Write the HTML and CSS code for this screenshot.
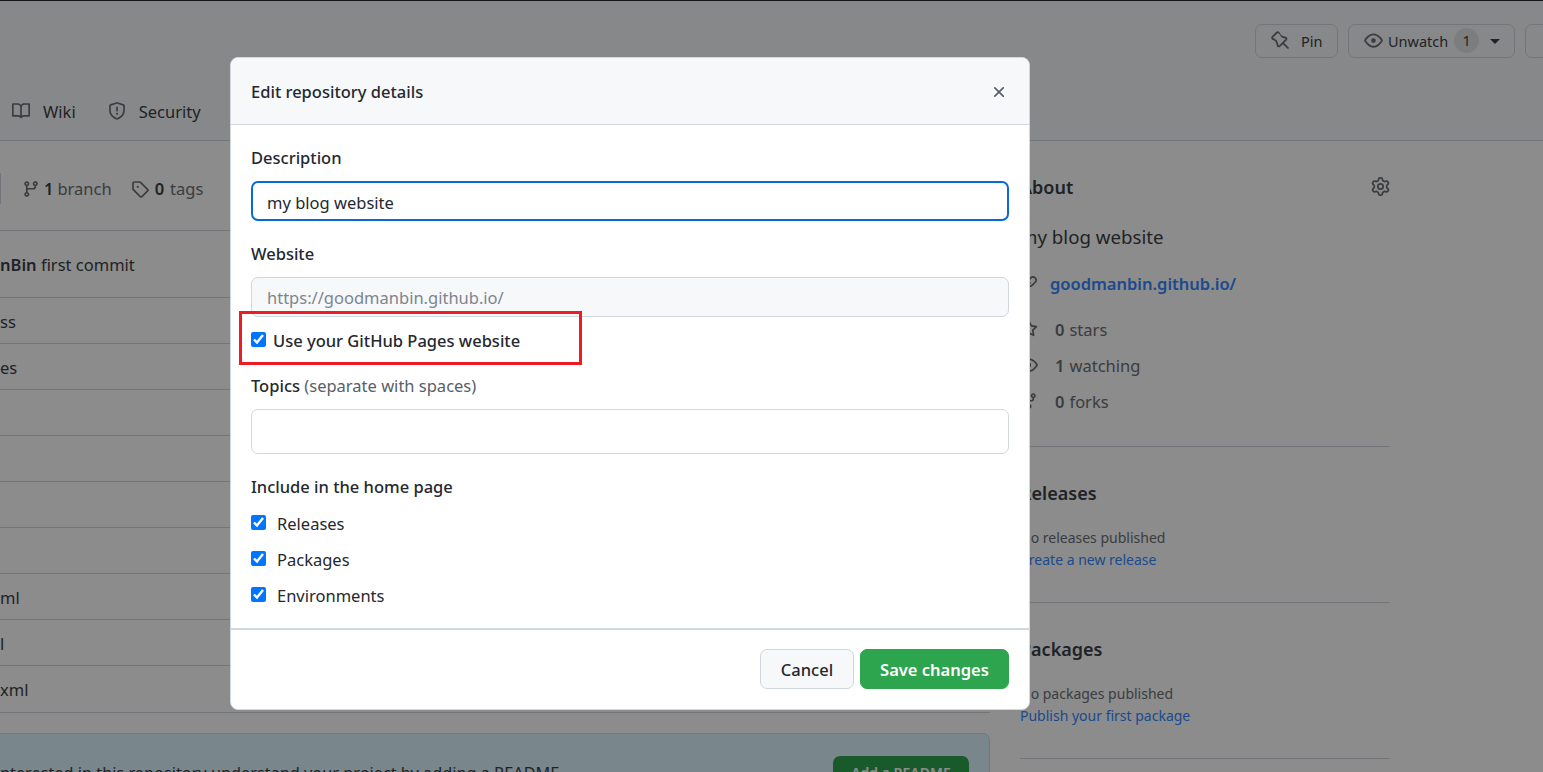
FILE: index.html

```html
<!DOCTYPE html>
<html lang="en">
<head>
    <meta charset="UTF-8">
    <title>Edit repository details</title>
    <link rel="stylesheet" href="styles.css">
</head>
<body>
    <svg class="sprite" width="0" height="0">
        <symbol id="i-pin" viewBox="0 0 16 16"><path d="M4.456.734a1.75 1.75 0 012.826.504l.613 1.327a3.081 3.081 0 002.084 1.707l2.454.584c1.332.317 1.8 1.972.832 2.94L11.06 10l3.72 3.72a.75.75 0 11-1.061 1.06L10 11.06l-2.204 2.205c-.968.968-2.623.5-2.94-.832l-.584-2.454a3.081 3.081 0 00-1.707-2.084l-1.327-.613a1.75 1.75 0 01-.504-2.826L4.456.734zM5.92 1.866a.25.25 0 00-.404-.072L1.794 5.516a.25.25 0 00.072.404l1.328.613A4.582 4.582 0 015.73 9.63l.584 2.454a.25.25 0 00.42.12l5.47-5.47a.25.25 0 00-.12-.42L10.63 6.13a4.581 4.581 0 01-3.098-2.537L6.92 2.265z"/></symbol>
        <symbol id="i-eye" viewBox="0 0 16 16"><path d="M8 2c1.981 0 3.671.992 4.933 2.078 1.27 1.091 2.187 2.345 2.637 3.023a1.62 1.62 0 0 1 0 1.798c-.45.678-1.367 1.932-2.637 3.023C11.67 13.008 9.981 14 8 14c-1.981 0-3.671-.992-4.933-2.078C1.797 10.83.88 9.576.43 8.898a1.62 1.62 0 0 1 0-1.798c.45-.677 1.367-1.931 2.637-3.022C4.33 2.992 6.019 2 8 2ZM1.679 7.932a.12.12 0 0 0 0 .136c.411.622 1.241 1.75 2.366 2.717C5.176 11.758 6.527 12.5 8 12.5c1.473 0 2.825-.742 3.955-1.715 1.124-.967 1.954-2.096 2.366-2.717a.12.12 0 0 0 0-.136c-.412-.621-1.242-1.75-2.366-2.717C10.824 4.242 9.473 3.5 8 3.5c-1.473 0-2.825.742-3.955 1.715-1.124.967-1.954 2.096-2.366 2.717ZM8 10a2 2 0 1 1-.001-3.999A2 2 0 0 1 8 10Z"/></symbol>
        <symbol id="i-book" viewBox="0 0 16 16"><path d="M0 1.75A.75.75 0 0 1 .75 1h4.253c1.227 0 2.317.59 3 1.501A3.743 3.743 0 0 1 11.006 1h4.245a.75.75 0 0 1 .75.75v10.5a.75.75 0 0 1-.75.75h-4.507a2.25 2.25 0 0 0-1.591.659l-.622.621a.75.75 0 0 1-1.06 0l-.622-.621A2.25 2.25 0 0 0 5.258 13H.75a.75.75 0 0 1-.75-.75Zm7.251 10.324.004-5.073-.002-2.253A2.25 2.25 0 0 0 5.003 2.5H1.5v9h3.757a3.75 3.75 0 0 1 1.994.574ZM8.755 4.75l-.004 7.322a3.752 3.752 0 0 1 1.992-.572H14.5v-9h-3.495a2.25 2.25 0 0 0-2.25 2.25Z"/></symbol>
        <symbol id="i-shield" viewBox="0 0 16 16"><path d="M7.467.133a1.748 1.748 0 0 1 1.066 0l5.25 1.68A1.75 1.75 0 0 1 15 3.48V7c0 1.566-.32 3.182-1.303 4.682-.983 1.498-2.585 2.813-5.032 3.855a1.697 1.697 0 0 1-1.33 0c-2.447-1.042-4.049-2.357-5.032-3.855C1.32 10.182 1 8.566 1 7V3.48a1.75 1.75 0 0 1 1.217-1.667Zm.61 1.429a.25.25 0 0 0-.153 0l-5.25 1.68a.25.25 0 0 0-.174.238V7c0 1.358.275 2.666 1.057 3.86.784 1.194 2.121 2.34 4.366 3.297a.196.196 0 0 0 .154 0c2.245-.956 3.582-2.104 4.366-3.298C13.225 9.666 13.5 8.36 13.5 7V3.48a.251.251 0 0 0-.174-.237l-5.25-1.68ZM8.75 4.75v3a.75.75 0 0 1-1.5 0v-3a.75.75 0 0 1 1.5 0ZM9 10.5a1 1 0 1 1-2 0 1 1 0 0 1 2 0Z"/></symbol>
        <symbol id="i-branch" viewBox="0 0 16 16"><path d="M9.5 3.25a2.25 2.25 0 1 1 3 2.122V6A2.5 2.5 0 0 1 10 8.5H6a1 1 0 0 0-1 1v1.128a2.251 2.251 0 1 1-1.5 0V5.372a2.25 2.25 0 1 1 1.5 0v1.836A2.493 2.493 0 0 1 6 7h4a1 1 0 0 0 1-1v-.628A2.25 2.25 0 0 1 9.5 3.25Zm-6 0a.75.75 0 1 0 1.5 0 .75.75 0 0 0-1.5 0Zm8.25-.75a.75.75 0 1 0 0 1.5.75.75 0 0 0 0-1.5ZM4.25 12a.75.75 0 1 0 0 1.5.75.75 0 0 0 0-1.5Z"/></symbol>
        <symbol id="i-tag" viewBox="0 0 16 16"><path d="M1 7.775V2.75C1 1.784 1.784 1 2.75 1h5.025c.464 0 .91.184 1.238.513l6.25 6.25a1.75 1.75 0 0 1 0 2.474l-5.026 5.026a1.75 1.75 0 0 1-2.474 0l-6.25-6.25A1.752 1.752 0 0 1 1 7.775Zm1.5 0c0 .066.026.13.073.177l6.25 6.25a.25.25 0 0 0 .354 0l5.025-5.025a.25.25 0 0 0 0-.354l-6.25-6.25a.25.25 0 0 0-.177-.073H2.75a.25.25 0 0 0-.25.25ZM6 5a1 1 0 1 1 0 2 1 1 0 0 1 0-2Z"/></symbol>
        <symbol id="i-gear" viewBox="0 0 16 16"><path d="M8 0a8.2 8.2 0 0 1 .701.031C9.444.095 9.99.645 10.16 1.29l.288 1.107c.018.066.079.158.212.224.231.114.454.243.668.386.123.082.233.09.299.071l1.103-.303c.644-.176 1.392.021 1.82.63.27.385.506.792.704 1.218.315.675.111 1.422-.364 1.891l-.814.806c-.049.048-.098.147-.088.294.016.257.016.515 0 .772-.01.147.038.246.088.294l.814.806c.475.469.679 1.216.364 1.891a7.977 7.977 0 0 1-.704 1.217c-.428.61-1.176.807-1.82.63l-1.102-.302c-.067-.019-.177-.011-.3.071a5.909 5.909 0 0 1-.668.386c-.133.066-.194.158-.211.224l-.29 1.106c-.168.646-.715 1.196-1.458 1.26a8.006 8.006 0 0 1-1.402 0c-.743-.064-1.289-.614-1.458-1.26l-.289-1.106c-.018-.066-.079-.158-.212-.224a5.738 5.738 0 0 1-.668-.386c-.123-.082-.233-.09-.299-.071l-1.103.303c-.644.176-1.392-.021-1.82-.63a8.12 8.12 0 0 1-.704-1.218c-.315-.675-.111-1.422.363-1.891l.815-.806c.05-.048.098-.147.088-.294a6.214 6.214 0 0 1 0-.772c.01-.147-.038-.246-.088-.294l-.815-.806C.635 6.045.431 5.298.746 4.623a7.92 7.92 0 0 1 .704-1.217c.428-.61 1.176-.807 1.82-.63l1.102.302c.067.019.177.011.3-.071.214-.143.437-.272.668-.386.133-.066.194-.158.211-.224l.29-1.106C6.009.645 6.556.095 7.299.03 7.53.01 7.764 0 8 0Zm-.571 1.525c-.036.003-.108.036-.137.146l-.289 1.105c-.147.561-.549.967-.998 1.189-.173.086-.34.183-.5.29-.417.278-.97.423-1.529.27l-1.103-.303c-.109-.03-.175.016-.195.045-.22.312-.412.644-.573.99-.014.031-.021.11.059.19l.815.806c.411.406.562.957.53 1.456a4.709 4.709 0 0 0 0 .582c.032.499-.119 1.05-.53 1.456l-.815.806c-.081.08-.073.159-.059.19.162.346.353.677.573.989.02.03.085.076.195.046l1.102-.303c.56-.153 1.113-.008 1.53.27.161.107.328.204.501.29.447.222.85.629.997 1.189l.289 1.105c.029.109.101.143.137.146a6.6 6.6 0 0 0 1.142 0c.036-.003.108-.036.137-.146l.289-1.105c.147-.561.549-.967.998-1.189.173-.086.34-.183.5-.29.417-.278.97-.423 1.529-.27l1.103.303c.109.029.175-.016.195-.045.22-.313.411-.644.573-.99.014-.031.021-.11-.059-.19l-.815-.806c-.411-.406-.562-.957-.53-1.456a4.709 4.709 0 0 0 0-.582c-.032-.499.119-1.05.53-1.456l.815-.806c.081-.08.073-.159.059-.19a6.464 6.464 0 0 0-.573-.989c-.02-.03-.085-.076-.195-.046l-1.102.303c-.56.153-1.113.008-1.53-.27a4.44 4.44 0 0 0-.501-.29c-.447-.222-.85-.629-.997-1.189l-.289-1.105c-.029-.11-.101-.143-.137-.146a6.6 6.6 0 0 0-1.142 0ZM11 8a3 3 0 1 1-6 0 3 3 0 0 1 6 0ZM9.5 8a1.5 1.5 0 1 0-3.001.001A1.5 1.5 0 0 0 9.5 8Z"/></symbol>
        <symbol id="i-x" viewBox="0 0 16 16"><path d="M3.72 3.72a.75.75 0 0 1 1.06 0L8 6.94l3.22-3.22a.749.749 0 0 1 1.275.326.749.749 0 0 1-.215.734L9.06 8l3.22 3.22a.749.749 0 0 1-.326 1.275.749.749 0 0 1-.734-.215L8 9.06l-3.22 3.22a.751.751 0 0 1-1.042-.018.751.751 0 0 1-.018-1.042L6.94 8 3.72 4.78a.75.75 0 0 1 0-1.06Z"/></symbol>
        <symbol id="i-link" viewBox="0 0 16 16"><path d="m7.775 3.275 1.25-1.25a3.5 3.5 0 1 1 4.95 4.95l-2.5 2.5a3.5 3.5 0 0 1-4.95 0 .751.751 0 0 1 .018-1.042.751.751 0 0 1 1.042-.018 1.998 1.998 0 0 0 2.83 0l2.5-2.5a2.002 2.002 0 0 0-2.83-2.83l-1.25 1.25a.751.751 0 0 1-1.042-.018.751.751 0 0 1-.018-1.042Zm-4.69 9.64a1.998 1.998 0 0 0 2.83 0l1.25-1.25a.751.751 0 0 1 1.042.018.751.751 0 0 1 .018 1.042l-1.25 1.25a3.5 3.5 0 1 1-4.95-4.95l2.5-2.5a3.5 3.5 0 0 1 4.95 0 .751.751 0 0 1-.018 1.042.751.751 0 0 1-1.042.018 1.998 1.998 0 0 0-2.83 0l-2.5 2.5a1.998 1.998 0 0 0 0 2.83Z"/></symbol>
        <symbol id="i-star" viewBox="0 0 16 16"><path d="M8 .25a.75.75 0 0 1 .673.418l1.882 3.815 4.21.612a.75.75 0 0 1 .416 1.279l-3.046 2.97.719 4.192a.751.751 0 0 1-1.088.791L8 12.347l-3.766 1.98a.75.75 0 0 1-1.088-.79l.72-4.194L.818 6.374a.75.75 0 0 1 .416-1.28l4.21-.611L7.327.668A.75.75 0 0 1 8 .25Zm0 2.445L6.615 5.5a.75.75 0 0 1-.564.41l-3.097.45 2.24 2.184a.75.75 0 0 1 .216.664l-.528 3.084 2.769-1.456a.75.75 0 0 1 .698 0l2.77 1.456-.53-3.084a.75.75 0 0 1 .216-.664l2.24-2.183-3.096-.45a.75.75 0 0 1-.564-.41L8 2.694Z"/></symbol>
        <symbol id="i-fork" viewBox="0 0 16 16"><path d="M5 5.372v.878c0 .414.336.75.75.75h4.5a.75.75 0 0 0 .75-.75v-.878a2.25 2.25 0 1 1 1.5 0v.878a2.25 2.25 0 0 1-2.25 2.25h-1.5v2.128a2.251 2.251 0 1 1-1.5 0V8.5h-1.5A2.25 2.25 0 0 1 3.5 6.25v-.878a2.25 2.25 0 1 1 1.5 0ZM5 3.25a.75.75 0 1 0-1.5 0 .75.75 0 0 0 1.5 0Zm6.75.75a.75.75 0 1 0 0-1.5.75.75 0 0 0 0 1.5Zm-3 8.75a.75.75 0 1 0-1.5 0 .75.75 0 0 0 1.5 0Z"/></symbol>
    </svg>

    <div class="page">
        <div class="topbar"></div>

        <header class="repo-head">
            <div class="repo-actions">
                <a class="btn btn-pin"><svg class="icon-lg"><use href="#i-pin"/></svg>Pin</a>
                <a class="btn btn-watch"><svg class="icon-lg"><use href="#i-eye"/></svg>Unwatch<span class="counter">1</span><span class="caret"></span></a>
                <a class="btn btn-cut"></a>
            </div>
            <nav class="repo-tabs">
                <a class="tab tab-wiki"><svg class="icon"><use href="#i-book"/></svg>Wiki</a>
                <a class="tab"><svg class="icon"><use href="#i-shield"/></svg>Security</a>
            </nav>
        </header>

        <main class="repo-main">
            <section class="files">
                <div class="branch-bar">
                    <span class="branch-select"></span>
                    <a class="meta meta-branch"><svg class="icon"><use href="#i-branch"/></svg><b>1</b> branch</a>
                    <a class="meta meta-tags"><svg class="icon"><use href="#i-tag"/></svg><b>0</b> tags</a>
                </div>
                <div class="file-box">
                    <div class="commit-row"><b>nBin</b> first commit</div>
                    <div class="file-row">ss</div>
                    <div class="file-row">es</div>
                    <div class="file-row"></div>
                    <div class="file-row"></div>
                    <div class="file-row"></div>
                    <div class="file-row"></div>
                    <div class="file-row">ml</div>
                    <div class="file-row">l</div>
                    <div class="file-row file-last">xml</div>
                </div>
                <div class="readme-hint">
                    <span>nterested in this repository understand your project by adding a README</span>
                    <a class="btn-readme">Add a README</a>
                </div>
            </section>

            <aside class="side">
                <div class="side-block side-about">
                    <div class="side-title"><h2>About</h2><svg class="icon gear"><use href="#i-gear"/></svg></div>
                    <p class="side-desc">my blog website</p>
                    <a class="side-link"><svg class="icon"><use href="#i-link"/></svg>goodmanbin.github.io/</a>
                    <div class="side-stat"><svg class="icon"><use href="#i-star"/></svg><b>0</b> stars</div>
                    <div class="side-stat"><svg class="icon"><use href="#i-eye"/></svg><b>1</b> watching</div>
                    <div class="side-stat"><svg class="icon"><use href="#i-fork"/></svg><b>0</b> forks</div>
                </div>
                <div class="side-block">
                    <h2>Releases</h2>
                    <p class="side-small">No releases published</p>
                    <a class="side-small side-blue">Create a new release</a>
                </div>
                <div class="side-block">
                    <h2>Packages</h2>
                    <p class="side-small">No packages published</p>
                    <a class="side-small side-blue">Publish your first package</a>
                </div>
            </aside>
        </main>

        <div class="backdrop"></div>

        <div class="dialog">
            <div class="dialog-head">
                <h1>Edit repository details</h1>
                <svg class="icon close"><use href="#i-x"/></svg>
            </div>
            <form class="dialog-body">
                <label class="field-label" for="desc">Description</label>
                <input class="input input-focus" id="desc" type="text" value="my blog website">

                <label class="field-label" for="site">Website</label>
                <input class="input input-off" id="site" type="text" placeholder="https://goodmanbin.github.io/" disabled>

                <label class="pages-check"><input type="checkbox" checked>Use your GitHub Pages website</label>

                <label class="field-label" for="topics">Topics <span class="hint">(separate with spaces)</span></label>
                <input class="input input-tall" id="topics" type="text">

                <div class="field-label include-label">Include in the home page</div>
                <label class="home-check"><input type="checkbox" checked>Releases</label>
                <label class="home-check"><input type="checkbox" checked>Packages</label>
                <label class="home-check"><input type="checkbox" checked>Environments</label>
            </form>
            <div class="dialog-foot">
                <button class="btn-cancel" type="button">Cancel</button>
                <button class="btn-save" type="button">Save changes</button>
            </div>
        </div>

        <div class="highlight"></div>
    </div>
</body>
</html>
```

FILE: styles.css

```css
* { box-sizing: border-box; }
html, body { margin: 0; height: 100%; overflow: hidden; }
body { font-family: "Noto Sans", "Open Sans", Arial, sans-serif; font-size: 16.5px; color: #24292f; background: #fff; }
h1, h2, p { margin: 0; }
.sprite { position: absolute; }
.icon { width: 18px; height: 18px; fill: #6b7075; flex: none; }
.icon-lg { width: 19px; height: 19px; fill: #6b7075; flex: none; }

.page { position: relative; width: 1543px; height: 772px; overflow: hidden; color: #3a3f45; }
.topbar { height: 1px; background: #24292f; }

/* repo header */
.repo-head { height: 140px; background: #f6f8fa; border-bottom: 1px solid #d0d7de; }
.repo-actions { display: flex; justify-content: flex-end; gap: 10px; padding-top: 23px; margin-right: -27px; }
.btn { display: flex; align-items: center; height: 34px; padding-bottom: 1px; border: 1px solid #d0d7de; border-radius: 7px; background: #f6f8fa; font-size: 14.5px; }
.btn-pin { width: 83px; padding-left: 15px; gap: 11px; }
.btn-watch { width: 167px; padding-left: 15px; gap: 5px; }
.btn-cut { width: 45px; }
.counter { width: 25px; height: 25px; border-radius: 50%; background: #e1e4e8; margin-left: 1px; text-align: center; line-height: 25px; }
.caret { width: 0; height: 0; border: 5px solid transparent; border-top-color: #3a3f45; border-bottom: 0; margin: 2px 0 0 6px; }
.repo-tabs { display: flex; gap: 32px; padding: 33px 0 0 12px; }
.tab { display: flex; align-items: center; gap: 13px; height: 40px; }

/* main columns */
.repo-main { display: flex; align-items: flex-start; gap: 30px; }
.files { width: 990px; flex: none; }
.branch-bar { display: flex; align-items: center; height: 89px; padding-top: 6px; }
.branch-select { width: 1px; height: 31px; background: #d0d7de; margin-right: 21px; }
.meta { display: flex; align-items: center; gap: 4px; color: #6b7075; }
.meta b { color: #3a3f45; font-weight: 600; }
.meta-branch { margin-right: 19px; }
.meta-tags { gap: 6px; }
.file-box { border-top: 1px solid #d0d7de; border-bottom: 1px solid #d0d7de; }
.commit-row { height: 66px; line-height: 68px; }
.commit-row b { font-weight: 600; }
.file-row { height: 46px; line-height: 47px; border-top: 1px solid #d0d7de; }
.file-last { height: 47px; }
.readme-hint { display: flex; justify-content: space-between; margin: 20px 0 0 -8px; height: 60px; padding: 22px 20px 0 8px; background: #ddf4ff; border: 1px solid #b6e3ff; border-radius: 7px; }
.readme-hint span { padding-top: 6px; font-size: 16.3px; margin-left: -1px; }
.btn-readme { height: 36px; width: 136px; background: #2da44e; color: #fff; border-radius: 7px; text-align: center; line-height: 34px; font-weight: 600; font-size: 14px; }

/* sidebar */
.side { width: 370px; flex: none; }
.side-block { border-bottom: 1px solid #d0d7de; padding: 33px 0 31px; }
.side-about { padding-top: 33px; height: 306px; }
.side h2 { font-size: 18px; font-weight: 600; line-height: 26px; }
.side-title { display: flex; justify-content: space-between; align-items: center; }
.gear { width: 19px; height: 19px; margin-top: -2px; }
.side-desc { font-size: 18.7px; line-height: 26px; margin-top: 24px; }
.side-link { display: flex; align-items: center; gap: 12px; margin: 22px 0 16px; color: #3388ff; font-weight: 600; }
.side-stat { display: flex; align-items: center; height: 36px; gap: 17px; color: #6b7075; }
.side-stat b { font-weight: 600; margin-right: -12px; }
.side-small { display: block; font-size: 14px; line-height: 22px; color: #6b7075; }
.side-block p.side-small { margin-top: 21px; }
.side-blue, .side-block a.side-blue { color: #3388ff; }

/* dialog */
.backdrop { position: absolute; inset: 0; background: rgba(0, 0, 0, 0.45); }
.dialog { position: absolute; left: 230px; top: 57px; width: 800px; height: 653px; background: #fff; border: 1px solid #d0d7de; border-radius: 8px; overflow: hidden; display: flex; flex-direction: column; color: #24292f; }
.dialog-head { display: flex; justify-content: space-between; align-items: center; height: 67px; flex: none; padding: 1px 21px 0 20px; background: #f6f8fa; border-bottom: 1px solid #d0d7de; }
.dialog-head h1 { font-size: 16.5px; font-weight: 500; }
.close { fill: #57606a; }
.dialog-body { flex: 1; padding: 21px 20px 0; border-bottom: 2px solid #d0d7de; }
.field-label { display: block; font-size: 16.5px; font-weight: 500; line-height: 24px; margin-bottom: 11px; }
.hint { font-weight: 400; color: #57606a; }
.input { display: block; width: 758px; height: 40px; padding: 1px 15px 0; margin-bottom: 21px; border: 1px solid #d0d7de; border-radius: 7px; font: inherit; color: #24292f; background: #fff; outline: none; }
.input-focus { border: 2px solid #0969da; padding: 2px 14px 0; }
.input-off { background: #f6f8fa; margin-bottom: 0; }
.input-off::placeholder { color: #7d8590; opacity: 1; }
.input-tall { height: 45px; margin-bottom: 21px; }
.pages-check { display: flex; align-items: center; height: 46px; font-weight: 500; margin-bottom: 11px; }
.pages-check input, .home-check input { width: 15px; height: 15px; margin: -2px 7px 0 0; flex: none; }
.home-check { display: flex; align-items: center; height: 36px; }
.home-check input { margin-right: 11px; }
.include-label { margin-bottom: 6px; }
.dialog-foot { display: flex; justify-content: flex-end; gap: 6px; height: 79px; padding: 19px 20px 0 0; flex: none; }
.btn-cancel, .btn-save { height: 40px; border-radius: 7px; font: inherit; font-weight: 500; }
.btn-cancel { width: 94px; background: #f6f8fa; border: 1px solid #d0d7de; color: #24292f; }
.btn-save { width: 149px; background: #2da44e; border: 1px solid #2da44e; color: #fff; font-weight: 600; }
.highlight { position: absolute; left: 239px; top: 311px; width: 343px; height: 54px; border: 3px solid #ed1c24; }
```
